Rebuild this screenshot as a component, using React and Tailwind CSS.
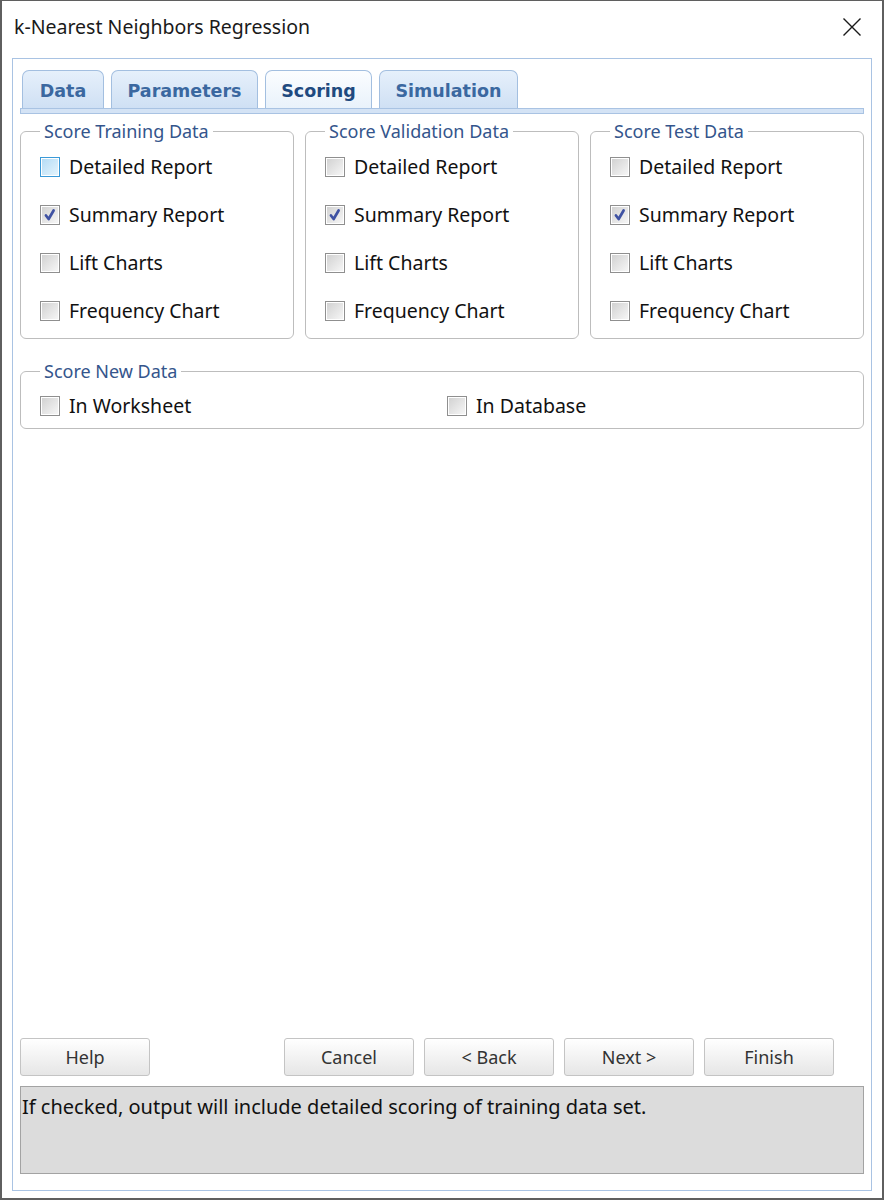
import React from 'react';

const font = { fontFamily: '"Noto Sans", "Open Sans", Arial, sans-serif' };

const Checkbox = ({ checked = false, hover = false }) => (
  <span
    className={`relative inline-flex w-[20px] h-[20px] shrink-0 border ${
      hover ? 'border-[#3b9ad8]' : 'border-[#8f8f8f]'
    }`}
  >
    <span
      className={`absolute inset-0 border border-white ${
        hover
          ? 'bg-gradient-to-br from-[#b5dcf5] to-[#e4f4fd]'
          : 'bg-gradient-to-br from-[#d2d2d2] to-[#f6f6f6]'
      }`}
    />
    {checked && (
      <svg viewBox="0 0 20 20" className="absolute inset-0 w-full h-full">
        <path d="M5.5 10.5 L8.5 14.5 L14 5" fill="none" stroke="#3f52a3" strokeWidth="3" strokeLinejoin="round" strokeLinecap="round" />
      </svg>
    )}
  </span>
);

const CheckRow = ({ label, checked, hover }) => (
  <div className="h-[48px] flex items-center gap-[9px]">
    <Checkbox checked={checked} hover={hover} />
    <span className="text-[19.5px] text-[#111] leading-none">{label}</span>
  </div>
);

const Group = ({ title, hoverFirst }) => (
  <fieldset className="border border-[#bdbdbd] rounded-[6px] pl-[19px] pt-[2px] pb-[3px]">
    <legend className="px-[4px] text-[18px] leading-[20px] text-[#34558c]">{title}</legend>
    <CheckRow label="Detailed Report" hover={hoverFirst} />
    <CheckRow label="Summary Report" checked />
    <CheckRow label="Lift Charts" />
    <CheckRow label="Frequency Chart" />
  </fieldset>
);

const Tab = ({ label, active, w }) => (
  <div
    className={`h-[38px] pt-[3px] rounded-t-[7px] border border-b-0 border-[#a3bfe0] flex items-center justify-center font-bold text-[17.5px] ${
      active
        ? 'bg-gradient-to-b from-[#fbfdff] to-[#e9f2fb] text-[#1f4a80]'
        : 'bg-gradient-to-b from-[#e6f0fb] to-[#cfe0f4] text-[#3b68a0]'
    } ${w}`}
    style={{ fontFamily: '"DejaVu Sans", Verdana, sans-serif' }}
  >
    {label}
  </div>
);

const Button = ({ label, className = '' }) => (
  <button
    className={`w-[130px] h-[38px] rounded-[3px] border border-[#c4c4c4] bg-gradient-to-b from-[#ffffff] to-[#e6e6e6] text-[18px] text-[#333] ${className}`}
  >
    {label}
  </button>
);

export default function App() {
  return (
    <div
      className="w-[884px] h-[1200px] bg-white border-l-2 border-r-2 border-b-2 border-t border-[#5f5f5f] flex flex-col"
      style={font}
    >
      {/* title bar */}
      <div className="h-[57px] shrink-0 flex items-center justify-between pl-[12px] pr-[20px] pb-[6px]">
        <span className="text-[19.5px] text-[#1a1a1a]">k-Nearest Neighbors Regression</span>
        <svg width="20" height="20" viewBox="0 0 20 20">
          <path d="M1.5 1.5 L18.5 18.5 M18.5 1.5 L1.5 18.5" stroke="#1a1a1a" strokeWidth="1.4" />
        </svg>
      </div>

      {/* main panel */}
      <div className="flex-1 mx-[10px] mb-[7px] border border-[#a9c3e3] px-[7px] pt-[11px] pb-[16px] flex flex-col">
        {/* tabs */}
        <div className="flex items-end gap-[7px] pl-[2px]">
          <Tab label="Data" w="w-[82px]" />
          <Tab label="Parameters" w="w-[147px]" />
          <Tab label="Scoring" active w="w-[107px]" />
          <Tab label="Simulation" w="w-[139px]" />
        </div>
        <div className="h-[6px] border border-[#a9c3e3] bg-[#d4e3f5]" />

        {/* scoring groups */}
        <div className="grid grid-cols-3 gap-[11px] mt-[7px]">
          <Group title="Score Training Data" hoverFirst />
          <Group title="Score Validation Data" />
          <Group title="Score Test Data" />
        </div>

        <fieldset className="mt-[22px] border border-[#bdbdbd] rounded-[6px] pl-[19px] pt-[3px]">
          <legend className="px-[4px] text-[18px] leading-[20px] text-[#34558c]">Score New Data</legend>
          <div className="h-[44px] flex items-center">
            <div className="w-[407px] flex items-center gap-[9px]">
              <Checkbox />
              <span className="text-[19.5px] text-[#111] leading-none">In Worksheet</span>
            </div>
            <div className="flex items-center gap-[9px]">
              <Checkbox />
              <span className="text-[19.5px] text-[#111] leading-none">In Database</span>
            </div>
          </div>
        </fieldset>

        <div className="flex-1" />

        {/* buttons */}
        <div className="flex gap-[10px]">
          <Button label="Help" className="mr-[124px]" />
          <Button label="Cancel" />
          <Button label="< Back" />
          <Button label="Next >" />
          <Button label="Finish" />
        </div>

        {/* status */}
        <div className="mt-[10px] h-[88px] bg-[#dcdcdc] border border-[#a3a3a3] pl-[1px] pt-[8px] text-[20px] leading-[24px] text-[#111]">
          If checked, output will include detailed scoring of training data set.
        </div>
      </div>
    </div>
  );
}
